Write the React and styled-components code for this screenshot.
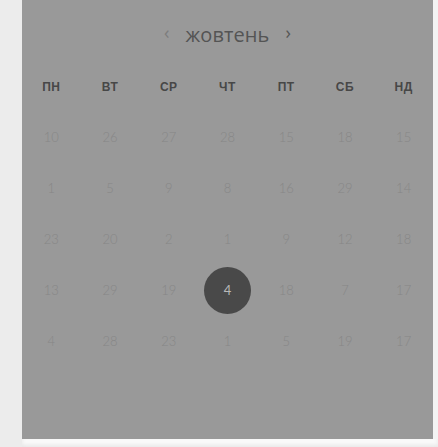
import React from 'react';
import styled, { createGlobalStyle } from 'styled-components';

const GlobalStyle = createGlobalStyle`
  html, body {
    margin: 0;
    padding: 0;
    background: #ececec;
    font-family: 'Open Sans', 'Liberation Sans', sans-serif;
    overflow: hidden;
  }
`;

const days = ['пн', 'вт', 'ср', 'чт', 'пт', 'сб', 'нд'];

const rows = [
  [10, 26, 27, 28, 15, 18, 15],
  [1, 5, 9, 8, 16, 29, 14],
  [23, 20, 2, 1, 9, 12, 18],
  [13, 29, 19, 4, 18, 7, 17],
  [4, 28, 23, 1, 5, 19, 17],
];

const App = () => {
  return (
    <>
      <GlobalStyle />
      <Page>
        <Sheet>
          <Panel>
            <MonthBar>
              <Arrow $muted>‹</Arrow>
              <Month>жовтень</Month>
              <Arrow>›</Arrow>
            </MonthBar>
            <Grid>
              {days.map((d) => (
                <DayHead key={d}>{d}</DayHead>
              ))}
              {rows.map((row, ri) =>
                row.map((n, ci) => {
                  const active = ri === 3 && ci === 3;
                  return (
                    <Cell key={`${ri}-${ci}`}>
                      {active ? <Selected>{n}</Selected> : <Num>{n}</Num>}
                    </Cell>
                  );
                }),
              )}
            </Grid>
          </Panel>
          <RightEdge />
        </Sheet>
        <Footer />
      </Page>
    </>
  );
};

const Page = styled.div`
  width: 438px;
  height: 447px;
  display: flex;
  flex-direction: column;
  padding-left: 22px;
  box-sizing: border-box;
`;

const Sheet = styled.div`
  display: flex;
  height: 439px;
`;

const Panel = styled.div`
  width: 411px;
  height: 100%;
  background: #999999;
  display: flex;
  flex-direction: column;
  align-items: stretch;
`;

const RightEdge = styled.div`
  flex: 1;
  background: #f3f3f3;
`;

const Footer = styled.div`
  flex: 1;
  background: #fafafa;
  box-shadow: 0 -2px 4px rgba(0, 0, 0, 0.08) inset;
`;

const MonthBar = styled.div`
  height: 68px;
  display: flex;
  align-items: center;
  justify-content: center;
  gap: 16px;
  box-sizing: border-box;
`;

const Month = styled.span`
  font-size: 20px;
  color: #545454;
  letter-spacing: 0.1px;
  line-height: 1;
  padding-top: 1px;
`;

const Arrow = styled.span`
  font-size: 18px;
  line-height: 1;
  color: ${(p) => (p.$muted ? '#7d7d7d' : '#555555')};
  padding-bottom: 4px;
`;

const Grid = styled.div`
  display: grid;
  grid-template-columns: repeat(7, 1fr);
  grid-template-rows: 43px repeat(5, 51.2px);
`;

const DayHead = styled.div`
  display: flex;
  align-items: center;
  justify-content: center;
  align-self: start;
  height: 38px;
  font-family: 'Liberation Sans', Arial, sans-serif;
  font-size: 12px;
  font-weight: bold;
  color: #474747;
  text-transform: uppercase;
  letter-spacing: 0.5px;
`;

const Cell = styled.div`
  display: flex;
  align-items: center;
  justify-content: center;
`;

const Num = styled.span`
  font-family: 'Lato', 'Open Sans', sans-serif;
  font-size: 13px;
  font-weight: 300;
  color: #878787;
`;

const Selected = styled.span`
  width: 47px;
  height: 47px;
  border-radius: 50%;
  background: #494949;
  color: #b8b8b8;
  display: flex;
  align-items: center;
  justify-content: center;
  font-family: 'Lato', 'Open Sans', sans-serif;
  font-size: 13px;
  font-weight: 400;
`;

export default App;
